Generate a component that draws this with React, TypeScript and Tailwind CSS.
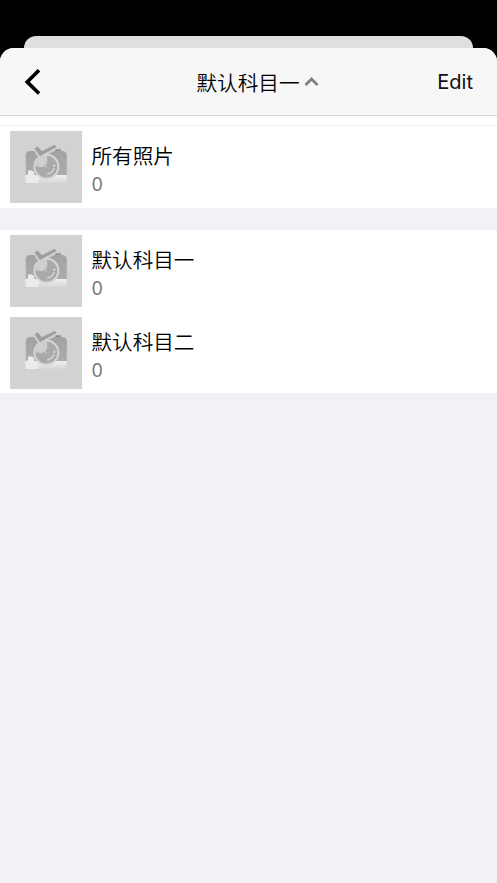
const FONT = "font-['Inter','Noto_Sans_CJK_SC',sans-serif]";

function CameraThumb() {
  return (
    <svg viewBox="0 0 72 72" className="h-[72px] w-[72px] shrink-0 bg-[#d2d2d2]" aria-hidden="true">
      <defs>
        <linearGradient id="strip" x1="0" y1="0" x2="0" y2="1">
          <stop offset="0" stopColor="#efefef" />
          <stop offset="1" stopColor="#d8d8d8" />
        </linearGradient>
        <linearGradient id="body" x1="0" y1="0" x2="0" y2="1">
          <stop offset="0" stopColor="#a2a2a2" />
          <stop offset="1" stopColor="#acacac" />
        </linearGradient>
      </defs>
      <rect x="45.3" y="18.2" width="5.6" height="2" rx="0.6" fill="#8e8e8e" />
      <path d="M15.8 45V24.5Q15.8 20 20.5 20H52Q56.8 20 56.8 24.5V45Z" fill="url(#body)" />
      <path d="M23.5 19L27 24.5L31 26.5L44 20V18.5H36L30 19Z" fill="#d2d2d2" />
      <path d="M15.6 44H56.8V50.6Q56.8 51.8 55.6 51.8H16.8Q15.6 51.8 15.6 50.6Z" fill="url(#strip)" />
      <path d="M15.6 44L18 43.3V39.4H22.8V40.6H24.3V44H27L29 47L28.2 52H16.8Q15.6 52 15.6 50.8Z" fill="#ebebeb" />
      <circle cx="36.4" cy="35.6" r="13" fill="#d5d5d5" />
      <circle cx="36.4" cy="35.6" r="10.9" fill="#aaaaaa" />
      <path d="M36.4 24.7C38.6 29 36.9 34.2 33.2 35.7C30.6 36.8 27.2 35.6 25.5 34.6C26 28.8 30.4 24.7 36.4 24.7Z" fill="#cecece" />
      <circle cx="36" cy="35.8" r="1" fill="#c3c3c3" />
      <circle cx="44.2" cy="34.7" r="1.2" fill="#d5d5d5" />
      <path d="M43.9 37.8Q42.4 41.8 37.8 43" fill="none" stroke="#d5d5d5" strokeWidth="1.5" strokeLinecap="round" />
      <path d="M24.4 17.4L27.6 15.2L31.7 20.3L45 13.8L46.5 16L30 25.2Z" fill="#9f9f9f" />
    </svg>
  );
}

function AlbumRow({ name, count, className }: { name: string; count: number; className: string }) {
  return (
    <div className={`flex items-start gap-[10px] bg-white px-[10px] pt-[5px] ${className}`}>
      <CameraThumb />
      <div className="flex flex-col pt-3">
        <span className="-ml-[0.5px] text-[20.6px] leading-7 font-[350] text-black">{name}</span>
        <span className="-ml-[0.5px] text-[18px] leading-7 font-normal text-[#777]">{count}</span>
      </div>
    </div>
  );
}

export default function App() {
  return (
    <div className={`flex h-[883px] w-[497px] flex-col overflow-hidden bg-black pt-9 ${FONT}`}>
      <div className="mx-6 h-3 shrink-0 rounded-t-[12px] bg-[#dfdfdf]" />
      <div className="flex flex-1 flex-col overflow-hidden rounded-t-[14px] bg-[#f2f1f7]">
        <header className="grid h-[68px] shrink-0 grid-cols-[1fr_auto_1fr] items-center border-b border-[#d8d8d8] bg-[#f7f7f7] px-6">
          <button aria-label="Back" className="w-fit">
            <svg width="18" height="26" viewBox="0 0 18 26" fill="none" stroke="#000" strokeWidth="3.6">
              <path d="M15 1.2L3.2 12.9L15 24.5" />
            </svg>
          </button>
          <div className="flex items-center gap-[5px] pl-[19px] text-[20.6px] font-[350] text-black">
            <span className="pt-[5px]">默认科目一</span>
            <svg width="15" height="10" viewBox="0 0 15 10" fill="none" stroke="#808080" strokeWidth="2.8">
              <path d="M1.5 9L7.5 3L13.5 9" />
            </svg>
          </div>
          <button className="justify-self-end pt-px text-[20px] font-normal text-[#111]">Edit</button>
        </header>
        <main className="flex flex-col">
          <div className="h-[10px] border-b border-[#efeff1] bg-white" />
          <AlbumRow name="所有照片" count={0} className="h-[82px]" />
          <section className="mt-[22px] bg-white">
            <AlbumRow name="默认科目一" count={0} className="h-[82px]" />
            <AlbumRow name="默认科目二" count={0} className="h-[81px]" />
          </section>
        </main>
      </div>
    </div>
  );
}
